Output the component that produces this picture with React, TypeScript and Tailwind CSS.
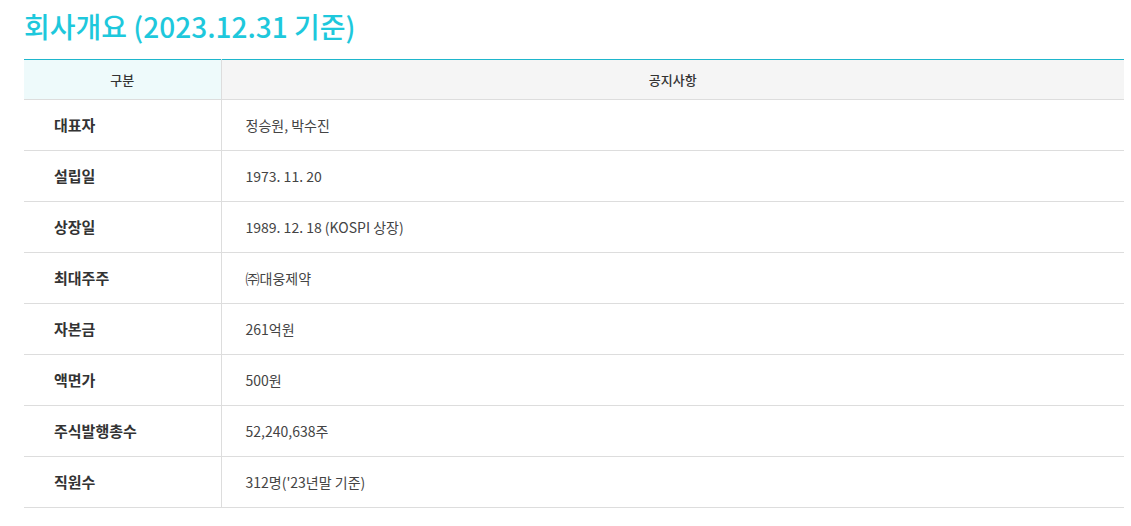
import React from "react";

const rows = [
  { label: "대표자", value: "정승원, 박수진" },
  { label: "설립일", value: "1973. 11. 20" },
  { label: "상장일", value: "1989. 12. 18 (KOSPI 상장)" },
  { label: "최대주주", value: "㈜대웅제약" },
  { label: "자본금", value: "261억원" },
  { label: "액면가", value: "500원" },
  { label: "주식발행총수", value: "52,240,638주" },
  { label: "직원수", value: "312명('23년말 기준)" },
];

export default function App() {
  return (
    <div
      className="w-[1131px] h-[526px] bg-white pl-6 pr-[7px] pt-[6px]"
      style={{ fontFamily: '"Noto Sans CJK KR", "Noto Sans", sans-serif' }}
    >
      {/* Title */}
      <h2 className="text-[28px] leading-[40px] font-medium text-[#1ec8dc]">
        회사개요 (2023.12.31 기준)
      </h2>

      {/* Table */}
      <table className="mt-[13px] w-[1100px] border-collapse border-t border-[#1eb6cc] table-fixed">
        <colgroup>
          <col className="w-[197px]" />
          <col />
        </colgroup>
        <thead>
          <tr className="h-[40px] border-b border-[#dddddd]">
            <th className="bg-[#eefafb] border-r border-[#dddddd] text-[13px] font-medium text-[#333333] text-center">
              구분
            </th>
            <th className="bg-[#f5f5f5] text-[13px] font-medium text-[#333333] text-center">
              공지사항
            </th>
          </tr>
        </thead>
        <tbody>
          {rows.map((row) => (
            <tr key={row.label} className="h-[51px] border-b border-[#dddddd]">
              <td className="border-r border-[#dddddd] pl-[30px] text-[15px] font-bold text-[#333333]">
                {row.label}
              </td>
              <td className="pl-[24px] text-[14px] text-[#444444]">{row.value}</td>
            </tr>
          ))}
        </tbody>
      </table>
    </div>
  );
}
